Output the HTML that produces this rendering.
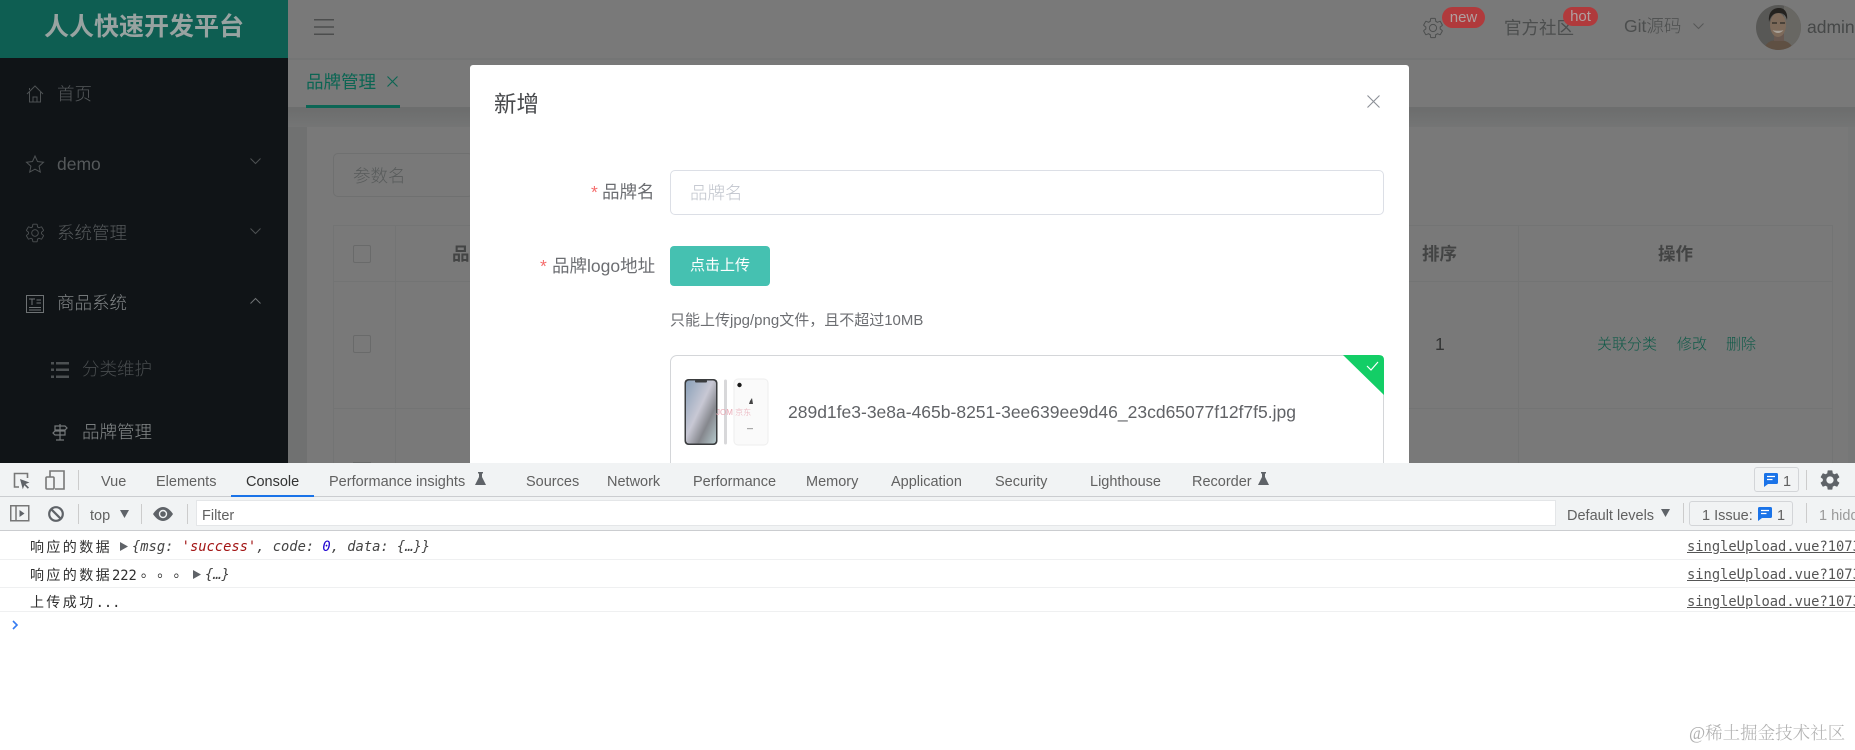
<!DOCTYPE html>
<html lang="zh-CN"><head><meta charset="utf-8"><title>品牌管理</title>
<style>
html,body{margin:0;padding:0;width:1855px;height:750px;overflow:hidden;background:#fff;font-weight:300;font-family:"Liberation Sans","Noto Sans CJK SC",sans-serif}
.a{position:absolute}
.t{position:absolute;white-space:nowrap;line-height:24px;height:24px}
svg{position:absolute;overflow:visible}
.side{color:#55595b;font-size:17.5px}
.dt{font-size:14.5px;color:#616161;font-weight:400}
.con{font-family:"DejaVu Sans Mono","Noto Sans CJK SC",monospace;font-size:13.75px;color:#303030;font-weight:400}
.cj{font-family:"Noto Sans CJK SC",sans-serif;font-size:14px;letter-spacing:2.4px}
.tc{display:inline-block;width:16.4px;font-family:"Noto Sans CJK SC",sans-serif;font-size:14px;transform:translate(4px,-3px)}
.i{font-style:italic}
.src{font-family:"DejaVu Sans Mono",monospace;font-size:13.75px;color:#555;text-decoration:underline;font-weight:400}
.sep{position:absolute;width:1px;background:#ccc}
.m{font-weight:400}
</style></head><body>

<!-- main page (dimmed) -->
<div class="a" style="left:288px;top:0;width:1567px;height:463px;background:#797979"></div>
<div class="a" style="left:288px;top:108px;width:1567px;height:19px;background:linear-gradient(#6c6d6d,#747575)"></div>
<div class="a" style="left:288px;top:127px;width:19px;height:336px;background:#707171"></div>
<div class="a" style="left:1848px;top:127px;width:7px;height:336px;background:#767777"></div>
<div class="a" style="left:288px;top:58px;width:1567px;height:2px;background:#747575"></div>
<div class="a" style="left:288px;top:107px;width:1567px;height:2px;background:#6d6e6e"></div>

<!-- sidebar -->
<div class="a" style="left:0;top:0;width:288px;height:58px;background:#0e5e52"></div>
<div class="a" style="left:0;top:58px;width:288px;height:405px;background:#101417"></div>
<div class="t" style="left:44px;top:15px;font-size:25px;font-weight:700;color:#98a3a1">人人快速开发平台</div>

<svg style="left:26px;top:85px" width="18" height="18" viewBox="0 0 18 18" fill="none" stroke="#4d5153" stroke-width="1"><path d="M1 9 9 1l8 8M3.500 7v10h11V7M7 17v-5h4v5M3.500 3v2"/></svg>
<div class="t side" style="left:57px;top:82px">首页</div>

<svg style="left:26px;top:155px" width="18" height="18" viewBox="0 0 18 18" fill="none" stroke="#4d5153" stroke-width="1"><path d="M9 1l2.500 5.500 6 .7-4.400 4 1.200 5.900L9 14.200 3.700 17.100l1.200-5.900L.5 7.200l6-.7z"/></svg>
<div class="t side" style="left:57px;top:152px">demo</div>
<svg style="left:250px;top:158px" width="11" height="6" viewBox="0 0 11 6" fill="none" stroke="#4d5153"><path d="M.5.500l5 5 5-5"/></svg>

<svg style="left:24px;top:222px" width="22" height="22" viewBox="0 0 24 24" fill="none" stroke="#4d5153" stroke-width="1"><path d="M19.140 12.940c.04-.3.06-.61.06-.94 0-.32-.02-.64-.07-.94l2.030-1.580a.49.49 0 0 0 .12-.61l-1.920-3.320a.488.488 0 0 0-.59-.22l-2.390.96c-.5-.38-1.030-.7-1.620-.94l-.36-2.540a.484.484 0 0 0-.48-.41h-3.840c-.24 0-.43.17-.47.41l-.36 2.540c-.59.24-1.130.57-1.620.94l-2.390-.96c-.22-.08-.47 0-.59.22L2.740 8.870c-.12.21-.08.47.12.61l2.030 1.580c-.05.3-.09.63-.09.94s.02.64.07.94l-2.030 1.580a.49.49 0 0 0-.12.61l1.920 3.320c.12.22.37.29.59.22l2.390-.96c.5.38 1.030.7 1.620.94l.36 2.540c.05.24.24.41.48.41h3.840c.24 0 .44-.17.47-.41l.36-2.540c.59-.24 1.130-.56 1.620-.94l2.390.96c.22.08.47 0 .59-.22l1.920-3.320c.12-.22.07-.47-.12-.61l-2.010-1.580zM12 15.600c-1.980 0-3.600-1.620-3.600-3.600s1.620-3.600 3.600-3.600 3.600 1.620 3.600 3.600-1.620 3.600-3.600 3.600z"/></svg>
<div class="t side" style="left:57px;top:221px">系统管理</div>
<svg style="left:250px;top:228px" width="11" height="6" viewBox="0 0 11 6" fill="none" stroke="#4d5153"><path d="M.5.500l5 5 5-5"/></svg>

<svg style="left:26px;top:295px" width="18" height="18" viewBox="0 0 18 18" fill="none" stroke="#6e7274" stroke-width="1"><rect x=".5" y=".5" width="17" height="17"/><path d="M3 4h6M6 4v6M10.500 5H15M10.500 8H15M3 12.500h12M3 15h12"/></svg>
<div class="t side" style="left:57px;top:291px;color:#808486">商品系统</div>
<svg style="left:250px;top:298px" width="11" height="6" viewBox="0 0 11 6" fill="none" stroke="#6e7274"><path d="M.5 5.500l5-5 5 5"/></svg>

<svg style="left:51px;top:362px" width="18" height="16" viewBox="0 0 18 16" fill="#4c5052"><rect x="0" y="0" width="3" height="2.500"/><rect x="5" y="0" width="13" height="2.500"/><rect x="0" y="6.500" width="3" height="2.500"/><rect x="5" y="6.500" width="13" height="2.500"/><rect x="0" y="13.500" width="3" height="2.500"/><rect x="5" y="13.500" width="13" height="2.500"/></svg>
<div class="t side" style="left:82px;top:357px;color:#484c4e">分类维护</div>

<svg style="left:51px;top:423px" width="18" height="18" viewBox="0 0 18 18" fill="none" stroke="#74787a" stroke-width="1.200"><path d="M9 1v16M5 17h8M4 3h10l2 2-2 2H4zM14 8H4L2 10l2 2h10z"/></svg>
<div class="t side" style="left:82px;top:420px;color:#868a8b">品牌管理</div>

<!-- header -->
<svg style="left:314px;top:19px" width="20" height="16" viewBox="0 0 20 16" stroke="#4c4d4d" stroke-width="1.500"><path d="M0 .75h20M0 8h20M0 15.250h20"/></svg>
<svg style="left:1421px;top:16px" width="24" height="24" viewBox="0 0 24 24" fill="none" stroke="#4c4e4e" stroke-width="1"><path d="M19.140 12.940c.04-.3.06-.61.06-.94 0-.32-.02-.64-.07-.94l2.030-1.580a.49.49 0 0 0 .12-.61l-1.920-3.320a.488.488 0 0 0-.59-.22l-2.390.96c-.5-.38-1.030-.7-1.620-.94l-.36-2.540a.484.484 0 0 0-.48-.41h-3.840c-.24 0-.43.17-.47.41l-.36 2.540c-.59.24-1.130.57-1.620.94l-2.390-.96c-.22-.08-.47 0-.59.22L2.740 8.870c-.12.21-.08.47.12.61l2.030 1.580c-.05.3-.09.63-.09.94s.02.64.07.94l-2.030 1.580a.49.49 0 0 0-.12.61l1.920 3.320c.12.22.37.29.59.22l2.390-.96c.5.38 1.030.7 1.620.94l.36 2.540c.05.24.24.41.48.41h3.840c.24 0 .44-.17.47-.41l.36-2.540c.59-.24 1.130-.56 1.620-.94l2.390.96c.22.08.47 0 .59-.22l1.920-3.320c.12-.22.07-.47-.12-.61l-2.010-1.580zM12 15.600c-1.980 0-3.600-1.620-3.600-3.600s1.620-3.600 3.600-3.600 3.600 1.620 3.600 3.600-1.620 3.600-3.600 3.600z"/></svg>
<div class="a" style="left:1442px;top:7px;width:43px;height:21px;border-radius:11px;background:#b03a3c"></div>
<div class="t" style="left:1442px;top:6px;width:43px;text-align:center;font-size:15px;color:#b0a0a0">new</div>
<div class="t" style="left:1504px;top:16px;font-size:17.5px;color:#4c4e4e;font-weight:400">官方社区</div>
<div class="a" style="left:1563px;top:7px;width:35px;height:19px;border-radius:10px;background:#b03a3c"></div>
<div class="t" style="left:1563px;top:5px;width:35px;text-align:center;font-size:15px;color:#b0a0a0">hot</div>
<div class="t" style="left:1624px;top:14px;font-size:17.5px;color:#4c4e4e">Git源码</div>
<svg style="left:1693px;top:23px" width="11" height="6" viewBox="0 0 11 6" fill="none" stroke="#565757"><path d="M.5.500l5 5 5-5"/></svg>
<svg style="left:1756px;top:5px" width="45" height="45" viewBox="0 0 45 45">
<defs><clipPath id="av"><circle cx="22.500" cy="22.500" r="22.500"/></clipPath></defs>
<g clip-path="url(#av)"><rect width="45" height="45" fill="#585856"/>
<rect x="28" y="0" width="17" height="45" fill="#686763"/>
<path d="M8 45c1-8 8-10 14-10s14 2 15 10z" fill="#5f5043"/>
<rect x="18" y="28" width="10" height="8" fill="#685850"/>
<ellipse cx="22" cy="20" rx="8" ry="12" fill="#7d6a5a"/>
<path d="M13 17c-1-10 4-14 10-14s9 5 8 12c-1-4-3-7-8-7s-8 2-10 9z" fill="#24221f"/>
<path d="M16.500 25c3 4 8 4 11 0-2 1-9 1-11 0z" fill="#a8a198"/>
<path d="M16 18h5M24 18h5" stroke="#2d2a26" stroke-width="1.200"/></g></svg>
<div class="t" style="left:1807px;top:15px;font-size:17.5px;color:#464848">admin</div>

<!-- tab -->
<div class="t" style="left:306px;top:70px;font-size:17.500px;color:#0b6553;font-weight:400">品牌管理</div>
<svg style="left:387px;top:76px" width="11" height="11" viewBox="0 0 11 11" stroke="#0b6553" stroke-width="1.100"><path d="M.5.500l10 10M10.500.5l-10 10"/></svg>
<div class="a" style="left:306px;top:105px;width:94px;height:3px;background:#0c6655"></div>

<!-- card -->
<div class="a" style="left:333px;top:153px;width:140px;height:44px;border:1px solid #6f7070;border-radius:5px;box-sizing:border-box"></div>
<div class="t" style="left:353px;top:164px;font-size:17.5px;color:#585b5b">参数名</div>

<!-- table lines -->
<div class="a" style="left:333px;top:225px;width:1499px;height:1px;background:#737474"></div>
<div class="a" style="left:333px;top:281px;width:1499px;height:1px;background:#737474"></div>
<div class="a" style="left:333px;top:408px;width:1499px;height:1px;background:#737474"></div>
<div class="a" style="left:333px;top:225px;width:1px;height:238px;background:#737474"></div>
<div class="a" style="left:395px;top:225px;width:1px;height:238px;background:#737474"></div>
<div class="a" style="left:1518px;top:225px;width:1px;height:238px;background:#737474"></div>
<div class="a" style="left:1832px;top:225px;width:1px;height:238px;background:#737474"></div>
<div class="a" style="left:353px;top:245px;width:18px;height:18px;border:1px solid #696a6a;border-radius:2px;box-sizing:border-box"></div>
<div class="a" style="left:353px;top:335px;width:18px;height:18px;border:1px solid #696a6a;border-radius:2px;box-sizing:border-box"></div>
<div class="a" style="left:353px;top:462px;width:18px;height:1px;background:#696a6a"></div>
<div class="t" style="left:452px;top:242px;font-size:17.5px;font-weight:700;color:#434444">品</div>
<div class="t" style="left:1422px;top:242px;font-size:17.5px;font-weight:700;color:#434444">排序</div>
<div class="t" style="left:1658px;top:242px;font-size:17.5px;font-weight:700;color:#434444">操作</div>
<div class="t" style="left:1435px;top:332px;font-size:17.5px;color:#333434">1</div>
<div class="t" style="left:1597px;top:333px;font-size:15px;color:#0f5a48">关联分类</div>
<div class="t" style="left:1677px;top:333px;font-size:15px;color:#0f5a48">修改</div>
<div class="t" style="left:1726px;top:333px;font-size:15px;color:#0f5a48">删除</div>

<!-- modal -->
<div class="a" style="left:470px;top:65px;width:939px;height:398px;background:#fff;border-radius:3px 3px 0 0"></div>
<div class="t m" style="left:494px;top:93px;font-size:22.5px;color:#484a4d">新增</div>
<svg style="left:1367px;top:95px" width="13" height="13" viewBox="0 0 13 13" stroke="#8b8f96" stroke-width="1.100"><path d="M.5.500l12 12M12.500.5l-12 12"/></svg>
<div class="t" style="left:591px;top:180px;font-size:17.5px;color:#f56c6c">*</div>
<div class="t m" style="left:602px;top:180px;font-size:17.5px;color:#6c6e72">品牌名</div>
<div class="a" style="left:670px;top:170px;width:714px;height:45px;border:1px solid #dcdfe6;border-radius:5px;box-sizing:border-box"></div>
<div class="t" style="left:690px;top:181px;font-size:17.5px;color:#c0c4cc">品牌名</div>
<div class="t" style="left:540px;top:254px;font-size:17.5px;color:#f56c6c">*</div>
<div class="t m" style="left:552px;top:254px;font-size:17.5px;color:#6c6e72">品牌logo地址</div>
<div class="a" style="left:670px;top:246px;width:100px;height:40px;background:#45c1b1;border-radius:4px"></div>
<div class="t m" style="left:690px;top:254px;font-size:15px;color:#fff">点击上传</div>
<div class="t m" style="left:670px;top:309px;font-size:15px;color:#6c6e72">只能上传jpg/png文件，且不超过10MB</div>

<div class="a" style="left:670px;top:355px;width:714px;height:120px;border:1px solid #d4d6d9;border-radius:7px;box-sizing:border-box"></div>
<svg style="left:1343px;top:355px" width="41" height="41" viewBox="0 0 41 41"><path d="M0 0H36Q41 0 41 5V40z" fill="#13ce66"/><path d="M24 11l4 4 7-8" fill="none" stroke="#fff" stroke-width="1.200"/></svg>
<svg style="left:684px;top:378px" width="86" height="70" viewBox="0 0 86 70">
<defs><linearGradient id="sc" x1="0" y1="0" x2="1" y2="1"><stop offset="0" stop-color="#8aa0b8"/><stop offset=".45" stop-color="#c8c8d4"/><stop offset=".7" stop-color="#85878d"/><stop offset="1" stop-color="#b5c8cb"/></linearGradient></defs>
<rect x=".5" y="1" width="33" height="66" rx="4" fill="#3a3c3e"/><rect x="2" y="2.500" width="30" height="63" rx="3" fill="url(#sc)"/><rect x="11" y="2" width="12" height="2.500" rx="1" fill="#3a3c3e"/>
<rect x="40" y="1.500" width="3" height="65" rx="1.500" fill="#d8d8da"/>
<rect x="50" y="1" width="34" height="66" rx="4" fill="#fafafa" stroke="#eeeeee"/><circle cx="55.500" cy="7" r="2.200" fill="#1a1a1a"/><path d="M66 23l2-3 1 6h-4z" fill="#444"/><rect x="63" y="50" width="6" height="1.200" fill="#aaa"/>
<text x="32" y="37" font-size="8" fill="#e8a9b5" font-family="Liberation Sans,Noto Sans CJK SC,sans-serif">JOM 京东</text>
</svg>
<div class="t" style="left:788px;top:400px;font-size:17.500px;color:#606266;font-weight:400">289d1fe3-3e8a-465b-8251-3ee639ee9d46_23cd65077f12f7f5.jpg</div>

<!-- devtools -->
<div class="a" style="left:0;top:463px;width:1855px;height:287px;background:#fff"></div>
<div class="a" style="left:0;top:463px;width:1855px;height:33px;background:#f1f3f4"></div>
<div class="a" style="left:0;top:496px;width:1855px;height:1px;background:#cbcdd0"></div>
<div class="a" style="left:0;top:497px;width:1855px;height:33px;background:#f1f3f4"></div>
<div class="a" style="left:0;top:530px;width:1855px;height:1px;background:#cbcdd0"></div>
<div class="a" style="left:231px;top:495px;width:83px;height:2px;background:#1a73e8"></div>
<div class="a" style="left:0;top:559px;width:1855px;height:1px;background:#eff0f1"></div>
<div class="a" style="left:0;top:587px;width:1855px;height:1px;background:#eff0f1"></div>
<div class="a" style="left:0;top:611px;width:1855px;height:1px;background:#eff0f1"></div>

<svg style="left:13px;top:472px" width="18" height="18" viewBox="0 0 18 18" fill="none"><path d="M6 15H1.500V1.500h13V6" stroke="#777" stroke-width="1.600"/><path d="M7 7l9.500 3.500-4 1.500 3.500 3.500-1.200 1.200-3.500-3.500-1.500 4z" fill="#5f6368"/></svg>
<svg style="left:45px;top:470px" width="20" height="20" viewBox="0 0 20 20" fill="none" stroke="#777" stroke-width="1.600"><path d="M5 7V1h14v18H10"/><rect x="1" y="7" width="8" height="12" rx="1"/></svg>
<div class="sep" style="left:78px;top:470px;height:20px"></div>
<div class="t dt" style="left:101px;top:470px">Vue</div>
<div class="t dt" style="left:156px;top:470px">Elements</div>
<div class="t dt" style="left:246px;top:470px;color:#333">Console</div>
<div class="t dt" style="left:329px;top:470px">Performance insights</div>
<svg style="left:475px;top:472px" width="11" height="13" viewBox="0 0 11 13" fill="#5f6368"><path d="M3 0h5v1.500H7V5l4 8H0l4-8V1.500H3z"/></svg>
<div class="t dt" style="left:526px;top:470px">Sources</div>
<div class="t dt" style="left:607px;top:470px">Network</div>
<div class="t dt" style="left:693px;top:470px">Performance</div>
<div class="t dt" style="left:806px;top:470px">Memory</div>
<div class="t dt" style="left:891px;top:470px">Application</div>
<div class="t dt" style="left:995px;top:470px">Security</div>
<div class="t dt" style="left:1090px;top:470px">Lighthouse</div>
<div class="t dt" style="left:1192px;top:470px">Recorder</div>
<svg style="left:1258px;top:472px" width="11" height="13" viewBox="0 0 11 13" fill="#5f6368"><path d="M3 0h5v1.500H7V5l4 8H0l4-8V1.500H3z"/></svg>

<div class="a" style="left:1754px;top:467px;width:45px;height:25px;border:1px solid #d3d5d8;border-radius:3px;box-sizing:border-box"></div>
<svg style="left:1764px;top:473px" width="14" height="14" viewBox="0 0 14 14"><path d="M1.500 0h11A1.500 1.500 0 0 1 14 1.500v8A1.500 1.500 0 0 1 12.500 11H4l-4 3V1.500A1.500 1.500 0 0 1 1.500 0z" fill="#1a73e8"/><path d="M3 3.500h8M3 6.500h5.500" stroke="#fff" stroke-width="1.200"/></svg>
<div class="t dt" style="left:1783px;top:470px">1</div>
<div class="sep" style="left:1806px;top:470px;height:20px"></div>
<svg style="left:1818px;top:468px" width="24" height="24" viewBox="0 0 24 24" fill="#5f6368"><path d="M19.140 12.940c.04-.3.06-.61.06-.94 0-.32-.02-.64-.07-.94l2.030-1.580a.49.49 0 0 0 .12-.61l-1.920-3.320a.488.488 0 0 0-.59-.22l-2.390.96c-.5-.38-1.030-.7-1.620-.94l-.36-2.540a.484.484 0 0 0-.48-.41h-3.840c-.24 0-.43.17-.47.41l-.36 2.540c-.59.24-1.130.57-1.620.94l-2.390-.96c-.22-.08-.47 0-.59.22L2.740 8.870c-.12.21-.08.47.12.61l2.030 1.580c-.05.3-.09.63-.09.94s.02.64.07.94l-2.030 1.580a.49.49 0 0 0-.12.61l1.920 3.320c.12.22.37.29.59.22l2.390-.96c.5.38 1.030.7 1.620.94l.36 2.540c.05.24.24.41.48.41h3.840c.24 0 .44-.17.47-.41l.36-2.540c.59-.24 1.130-.56 1.620-.94l2.390.96c.22.08.47 0 .59-.22l1.920-3.320c.12-.22.07-.47-.12-.61l-2.010-1.580zM12 15.600c-1.980 0-3.600-1.620-3.600-3.600s1.620-3.600 3.600-3.600 3.600 1.620 3.600 3.600-1.620 3.600-3.600 3.600z"/></svg>

<svg style="left:10px;top:505px" width="20" height="17" viewBox="0 0 20 17" fill="none"><rect x=".75" y=".75" width="18" height="15" stroke="#777" stroke-width="1.500"/><path d="M6 1v15" stroke="#777" stroke-width="1.500"/><path d="M9.500 5l5 3.500-5 3.500z" fill="#5f6368"/></svg>
<svg style="left:48px;top:506px" width="16" height="16" viewBox="0 0 16 16" fill="none" stroke="#5f6368" stroke-width="2.200"><circle cx="8" cy="8" r="6.800"/><path d="M3.200 3.200l9.600 9.600"/></svg>
<div class="sep" style="left:78px;top:504px;height:20px"></div>
<div class="t dt" style="left:90px;top:504px">top</div>
<svg style="left:120px;top:510px" width="9" height="8" viewBox="0 0 9 8" fill="#5f6368"><path d="M0 0h9L4.500 8z"/></svg>
<div class="sep" style="left:141px;top:504px;height:20px"></div>
<svg style="left:153px;top:507px" width="20" height="14" viewBox="0 0 20 14"><path d="M0 7c3-4.500 6.500-7 10-7s7 2.500 10 7c-3 4.500-6.500 7-10 7S3 11.500 0 7z" fill="#5f6368"/><circle cx="10" cy="7" r="4.200" fill="#f1f3f4"/><circle cx="10" cy="7" r="2.800" fill="#5f6368"/></svg>
<div class="sep" style="left:187px;top:504px;height:20px"></div>
<div class="a" style="left:196px;top:500px;width:1360px;height:26px;background:#fff;border:1px solid #e4e6e8;box-sizing:border-box"></div>
<div class="t dt" style="left:202px;top:504px">Filter</div>
<div class="t dt" style="left:1567px;top:504px">Default levels</div>
<svg style="left:1661px;top:509px" width="9" height="8" viewBox="0 0 9 8" fill="#5f6368"><path d="M0 0h9L4.500 8z"/></svg>
<div class="sep" style="left:1683px;top:503px;height:20px"></div>
<div class="a" style="left:1689px;top:501px;width:104px;height:25px;border:1px solid #d3d5d8;border-radius:3px;box-sizing:border-box"></div>
<div class="t dt" style="left:1702px;top:504px">1 Issue:</div>
<svg style="left:1758px;top:507px" width="14" height="14" viewBox="0 0 14 14"><path d="M1.500 0h11A1.500 1.500 0 0 1 14 1.500v8A1.500 1.500 0 0 1 12.500 11H4l-4 3V1.500A1.500 1.500 0 0 1 1.500 0z" fill="#1a73e8"/><path d="M3 3.500h8M3 6.500h5.500" stroke="#fff" stroke-width="1.200"/></svg>
<div class="t dt" style="left:1777px;top:504px">1</div>
<div class="sep" style="left:1806px;top:503px;height:20px"></div>
<div class="t dt" style="left:1819px;top:504px;color:#9a9a9a">1 hidd</div>

<div class="t con" style="left:30px;top:535px"><span class="cj">响应的数据</span></div>
<svg style="left:120px;top:542px" width="8" height="9" viewBox="0 0 8 9" fill="#5f6368"><path d="M0 0l8 4.500L0 9z"/></svg>
<div class="t con i" style="left:132px;top:535px;color:#444">{msg: <span style="color:#a31515">'success'</span>, code: <span style="color:#1c00cf">0</span>, data: {…}}</div>
<div class="t con" style="left:30px;top:563px"><span class="cj">响应的数据</span>222<span class="tc">。</span><span class="tc">。</span><span class="tc">。</span></div>
<svg style="left:193px;top:570px" width="8" height="9" viewBox="0 0 8 9" fill="#5f6368"><path d="M0 0l8 4.500L0 9z"/></svg>
<div class="t con i" style="left:205px;top:563px;color:#444">{…}</div>
<div class="t con" style="left:30px;top:590px"><span class="cj">上传成功</span>...</div>
<div class="t src" style="left:1687px;top:535px">singleUpload.vue?1073</div>
<div class="t src" style="left:1687px;top:563px">singleUpload.vue?1073</div>
<div class="t src" style="left:1687px;top:590px">singleUpload.vue?1073</div>
<svg style="left:12px;top:620px" width="7" height="10" viewBox="0 0 7 10" fill="none" stroke="#367cf1" stroke-width="1.600"><path d="M1 1l4 4-4 4"/></svg>

<div class="t" style="left:1689px;top:721px;font-size:17.500px;color:#b0b0b0;font-family:'Liberation Serif','Noto Serif CJK SC',serif">@稀土掘金技术社区</div>
</body></html>
